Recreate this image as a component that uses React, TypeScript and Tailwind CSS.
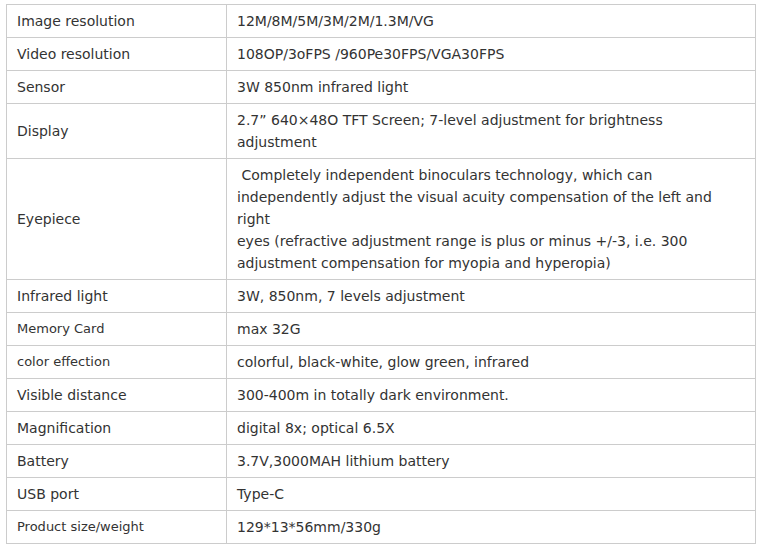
import React from 'react';

interface SpecRow {
  label: string;
  value: React.ReactNode;
  small?: boolean;
}

const rows: SpecRow[] = [
  { label: 'Image resolution', value: '12M/8M/5M/3M/2M/1.3M/VG' },
  { label: 'Video resolution', value: '108OP/3oFPS /960Pe30FPS/VGA30FPS' },
  { label: 'Sensor', value: '3W 850nm infrared light' },
  { label: 'Display', value: '2.7\u201d 640\u00d748O TFT Screen; 7-level adjustment for brightness adjustment' },
  {
    label: 'Eyepiece',
    value: (
      <>
        {'\u00a0Completely independent binoculars technology, which can independently adjust the visual acuity compensation of the left and right'}
        <br />
        eyes (refractive adjustment range is plus or minus +/-3, i.e. 300 adjustment compensation for myopia and hyperopia)
      </>
    ),
  },
  { label: 'Infrared light', value: '3W, 850nm, 7 levels adjustment' },
  { label: 'Memory Card', value: 'max 32G', small: true },
  { label: 'color effection', value: 'colorful, black-white, glow green, infrared', small: true },
  { label: 'Visible distance', value: '300-400m in totally dark environment.' },
  { label: 'Magnification', value: 'digital 8x; optical 6.5X' },
  { label: 'Battery', value: '3.7V,3000MAH lithium battery' },
  { label: 'USB port', value: 'Type-C' },
  { label: 'Product size/weight', value: '129*13*56mm/330g', small: true },
];

export default function App() {
  return (
    <div className="min-h-[551px] w-[764px] bg-white pl-[6px] pt-[4px] font-['DejaVu_Sans',Verdana,sans-serif] text-[#333]">
      <table className="w-[750px] border-collapse">
        <tbody>
          {rows.map((row) => (
            <tr key={row.label}>
              <td
                className={`w-[220px] border border-[#ccc] px-[10px] py-[5px] align-middle leading-[22px] ${
                  row.small ? 'text-[13px]' : 'text-[14px]'
                }`}
              >
                {row.label}
              </td>
              <td className="border border-[#ccc] px-[10px] py-[5px] align-middle text-[14px] leading-[22px]">
                {row.value}
              </td>
            </tr>
          ))}
        </tbody>
      </table>
    </div>
  );
}
